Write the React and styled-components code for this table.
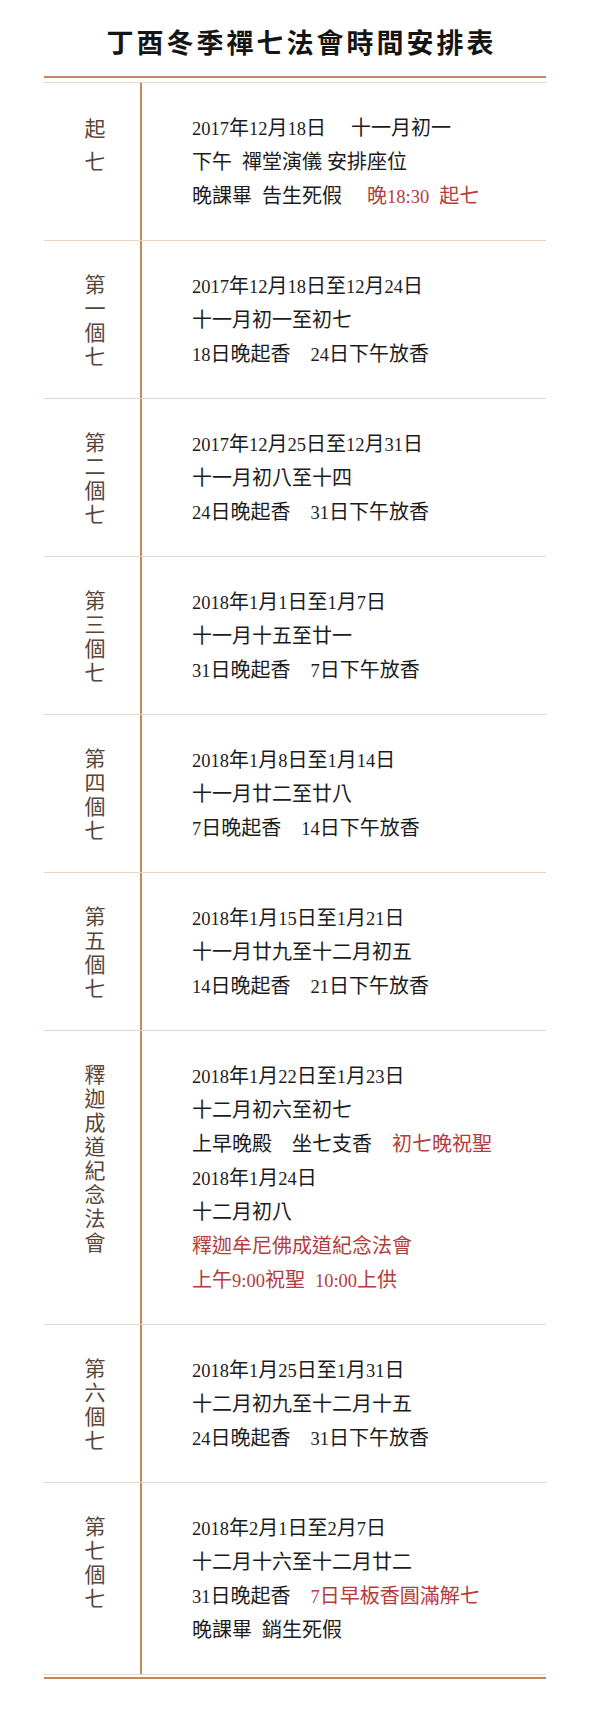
import React from 'react';
import styled, { createGlobalStyle } from 'styled-components';

// ---------------------------------------------------------------------------
// Schedule data — each row is a label (drawn one glyph per line) and lines of
// text; a line is a list of parts, parts with red: true are highlighted
// ---------------------------------------------------------------------------
const ROWS = [
  {
    label: '起七',
    loose: true,
    lines: [
      [{ text: '2017年12月18日　 十一月初一' }],
      [{ text: '下午  禪堂演儀 安排座位' }],
      [{ text: '晚課畢  告生死假　 ' }, { text: '晚18:30  起七', red: true }],
    ],
  },
  {
    label: '第一個七',
    lines: [
      [{ text: '2017年12月18日至12月24日' }],
      [{ text: '十一月初一至初七' }],
      [{ text: '18日晚起香　24日下午放香' }],
    ],
  },
  {
    label: '第二個七',
    lines: [
      [{ text: '2017年12月25日至12月31日' }],
      [{ text: '十一月初八至十四' }],
      [{ text: '24日晚起香　31日下午放香' }],
    ],
  },
  {
    label: '第三個七',
    lines: [
      [{ text: '2018年1月1日至1月7日' }],
      [{ text: '十一月十五至廿一' }],
      [{ text: '31日晚起香　7日下午放香' }],
    ],
  },
  {
    label: '第四個七',
    lines: [
      [{ text: '2018年1月8日至1月14日' }],
      [{ text: '十一月廿二至廿八' }],
      [{ text: '7日晚起香　14日下午放香' }],
    ],
  },
  {
    label: '第五個七',
    lines: [
      [{ text: '2018年1月15日至1月21日' }],
      [{ text: '十一月廿九至十二月初五' }],
      [{ text: '14日晚起香　21日下午放香' }],
    ],
  },
  {
    label: '釋迦成道紀念法會',
    lines: [
      [{ text: '2018年1月22日至1月23日' }],
      [{ text: '十二月初六至初七' }],
      [{ text: '上早晚殿　坐七支香　' }, { text: '初七晚祝聖', red: true }],
      [{ text: '2018年1月24日' }],
      [{ text: '十二月初八' }],
      [{ text: '釋迦牟尼佛成道紀念法會', red: true }],
      [{ text: '上午9:00祝聖  10:00上供', red: true }],
    ],
  },
  {
    label: '第六個七',
    lines: [
      [{ text: '2018年1月25日至1月31日' }],
      [{ text: '十二月初九至十二月十五' }],
      [{ text: '24日晚起香　31日下午放香' }],
    ],
  },
  {
    label: '第七個七',
    lines: [
      [{ text: '2018年2月1日至2月7日' }],
      [{ text: '十二月十六至十二月廿二' }],
      [{ text: '31日晚起香　' }, { text: '7日早板香圓滿解七', red: true }],
      [{ text: '晚課畢  銷生死假' }],
    ],
  },
];

const FONT = `"Liberation Serif", "Noto Sans CJK TC", serif`;
const RULE = '#c8875a';
const RULE_LIGHT = '#ecd4c2';

// ---------------------------------------------------------------------------
// Styled components
// ---------------------------------------------------------------------------
const GlobalStyle = createGlobalStyle`
  html, body {
    margin: 0;
    padding: 0;
    background: #ffffff;
  }
  body {
    font-family: ${FONT};
  }
`;

const Page = styled.div`
  width: 600px;
  padding: 24px 0 49px;
  box-sizing: border-box;
  background: #ffffff;
`;

const Title = styled.h1`
  margin: 0 0 12px;
  padding-left: 3px;
  text-align: center;
  font-family: ${FONT};
  font-size: 27px;
  line-height: 40px;
  font-weight: 700;
  letter-spacing: 3px;
  color: #151515;
`;

const Table = styled.div`
  margin-left: 44px;
  width: 502px;
  border-top: 2px solid ${RULE};
  border-bottom: 2px solid ${RULE};
  padding: 4px 0 2px;
`;

const TableInner = styled.div`
  border-top: 1px solid ${RULE_LIGHT};
  border-bottom: 1px solid ${RULE_LIGHT};
`;

const Row = styled.div`
  display: grid;
  grid-template-columns: 96px 1fr;

  & + & {
    border-top: 1px solid ${RULE_LIGHT};
  }
`;

const LabelCell = styled.div`
  display: flex;
  flex-direction: column;
  align-items: center;
  padding: ${(p) => (p.$loose ? '30px' : '32px')} 0 0 6px;
`;

const LabelChar = styled.span`
  font-size: 21px;
  line-height: ${(p) => (p.$loose ? '33px' : '24px')};
  color: #5b4536;
`;

const ContentCell = styled.div`
  border-left: 2px solid ${RULE};
  padding: 28px 0 27px 50px;
`;

const Line = styled.div`
  height: 34px;
  font-size: 20px;
  line-height: 34px;
  color: #1c1c1c;
  white-space: pre;
`;

const Part = styled.span`
  color: ${(p) => (p.$red ? '#b43c3c' : 'inherit')};
`;

// Latin digits in the reference run a touch narrower than half an em
const Num = styled.span`
  font-size: 18.5px;
  line-height: 1;
`;

// ---------------------------------------------------------------------------
// Page
// ---------------------------------------------------------------------------
function withNumbers(text) {
  return text.split(/([0-9:]+)/).map((chunk, i) =>
    /^[0-9:]+$/.test(chunk) ? <Num key={i}>{chunk}</Num> : chunk
  );
}

function ScheduleRow({ row }) {
  return (
    <Row>
      <LabelCell $loose={row.loose}>
        {[...row.label].map((ch, i) => (
          <LabelChar key={i} $loose={row.loose}>{ch}</LabelChar>
        ))}
      </LabelCell>
      <ContentCell>
        {row.lines.map((parts, i) => (
          <Line key={i}>
            {parts.map((part, j) => (
              <Part key={j} $red={part.red}>{withNumbers(part.text)}</Part>
            ))}
          </Line>
        ))}
      </ContentCell>
    </Row>
  );
}

export default function App() {
  return (
    <Page>
      <GlobalStyle />
      <Title>丁酉冬季禪七法會時間安排表</Title>
      <Table>
        <TableInner>
          {ROWS.map((row) => (
            <ScheduleRow key={row.label} row={row} />
          ))}
        </TableInner>
      </Table>
    </Page>
  );
}
